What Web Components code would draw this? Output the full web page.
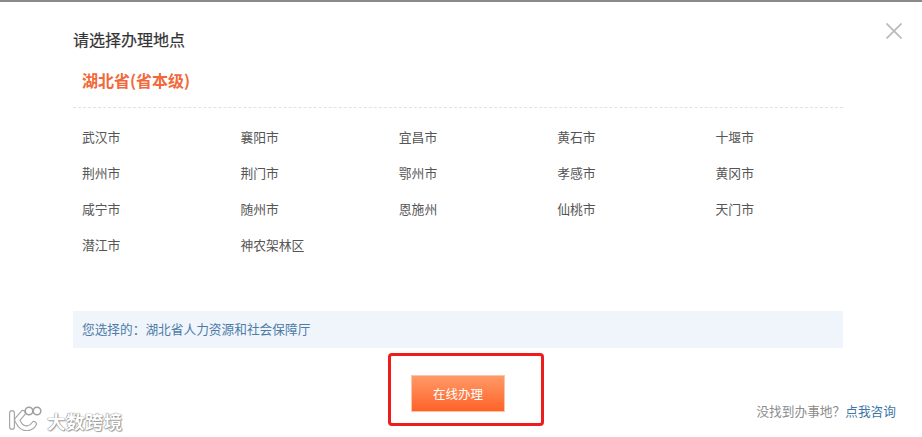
<!DOCTYPE html>
<html lang="zh">
<head>
<meta charset="utf-8">
<title>请选择办理地点</title>
<style>
  html, body { margin: 0; padding: 0; background: #fff; }
  body { font-family: "Noto Sans CJK SC", "Liberation Sans", sans-serif; overflow: hidden; }
</style>
</head>
<body>
<place-dialog>
  <span slot="title">请选择办理地点</span>
  <span slot="province">湖北省(省本级)</span>
  <city-list cities="武汉市,襄阳市,宜昌市,黄石市,十堰市,荆州市,荆门市,鄂州市,孝感市,黄冈市,咸宁市,随州市,恩施州,仙桃市,天门市,潜江市,神农架林区"></city-list>
  <picked-place slot="picked">您选择的&#xFF1A;湖北省人力资源和社会保障厅</picked-place>
  <go-button slot="action">在线办理</go-button>
  <help-link slot="help"></help-link>
  <brand-mark slot="mark"></brand-mark>
</place-dialog>

<script>
// Dialog shell: top rule, close cross, heading, province, list, picked line, footer.
class PlaceDialog extends HTMLElement {
  connectedCallback() {
    this.attachShadow({ mode: 'open' }).innerHTML = `
      <style>
        :host { display: flex; flex-direction: column; position: relative; width: 922px; height: 437px;
                box-sizing: border-box; border-top: 2px solid #8a8a8a; background: #fff; }
        .close { position: absolute; top: 21px; right: 20px; width: 16px; height: 16px; }
        .body { display: flex; flex-direction: column; margin: 0 79px 0 73px; }
        .title { height: 24px; line-height: 24px; margin-top: 25px; font-size: 16px; font-weight: 400;
                 color: #333; -webkit-text-stroke: 0.2px #333; }
        .province { height: 24px; line-height: 24px; margin-top: 17px; padding-left: 9px; font-size: 16px;
                    font-weight: 700; color: #f2683a; }
        .rule { margin-top: 15px; border-top: 1px dashed #e2e2e2; }
        .list { height: 203px; }
        .foot { display: flex; justify-content: center; padding-top: 27px; }
        /* red annotation box drawn over the screenshot, not centred on the button */
        .frame { position: absolute; left: 388px; top: 351px; box-sizing: border-box;
                 width: 156px; height: 73px; border: 3px solid #ee1c1c; border-radius: 4px; }
        .help { position: absolute; right: 26px; bottom: 17px; }
        .mark { position: absolute; left: 7px; bottom: 5px; }
      </style>
      <svg class="close" viewBox="0 0 16 16" fill="none" stroke="#bababa" stroke-width="1.7">
        <path d="M0.5 0.5L15.5 15.5M15.5 0.5L0.5 15.5"/>
      </svg>
      <div class="body">
        <div class="title"><slot name="title"></slot></div>
        <div class="province"><slot name="province"></slot></div>
        <div class="rule"></div>
        <div class="list"><slot></slot></div>
        <slot name="picked"></slot>
        <div class="foot"><slot name="action"></slot></div>
      </div>
      <div class="frame"></div>
      <div class="help"><slot name="help"></slot></div>
      <div class="mark"><slot name="mark"></slot></div>`;
  }
}

// Five-column grid of cities, from a comma list.
class CityList extends HTMLElement {
  connectedCallback() {
    const cities = (this.getAttribute('cities') || '').split(',');
    this.attachShadow({ mode: 'open' }).innerHTML = `
      <style>
        :host { display: block; }
        .grid { display: grid; grid-template-columns: repeat(5, 158.4px); grid-auto-rows: 36px;
                padding: 11px 0 0 9px; font-size: 12.8px; color: #555; }
        .grid span { line-height: 35px; white-space: nowrap; }
      </style>
      <div class="grid">${cities.map(c => `<span>${c}</span>`).join('')}</div>`;
  }
}

class PickedPlace extends HTMLElement {
  connectedCallback() {
    this.attachShadow({ mode: 'open' }).innerHTML = `
      <style>
        :host { display: block; height: 37px; line-height: 36px; padding-left: 9px; background: #f0f5fc;
                font-size: 12.7px; color: #4d7ba6; }
      </style>
      <slot></slot>`;
  }
}

class GoButton extends HTMLElement {
  connectedCallback() {
    this.attachShadow({ mode: 'open' }).innerHTML = `
      <style>
        :host { display: block; box-sizing: border-box; width: 94px; height: 37px; line-height: 35px;
                text-align: center; font-size: 12.5px; color: #fff; border: 1px solid #fbc5a8;
                background: linear-gradient(#ff9a68, #ff6228); }
      </style>
      <slot></slot>`;
  }
}

class HelpLink extends HTMLElement {
  connectedCallback() {
    this.attachShadow({ mode: 'open' }).innerHTML = `
      <style>
        :host { display: block; font-size: 12.7px; line-height: 18px; color: #8c8c8c; white-space: nowrap; }
        a { color: #3f77a8; text-decoration: none; }
      </style>
      没找到办事地&#xFF1F;<a href="#">点我咨询</a>`;
  }
}

// Faint watermark over the corner: outlined logo and brand name.
class BrandMark extends HTMLElement {
  connectedCallback() {
    this.attachShadow({ mode: 'open' }).innerHTML = `
      <style>
        :host { display: flex; align-items: center; gap: 4px; height: 28px; }
        span { font-size: 18.5px; line-height: 20px; letter-spacing: 0.4px; color: #fff; font-weight: 700; margin-top: 5px;
               text-shadow: 0 0 1px #777, 0 0 1px #777, 1px 1px 1px #aaa; }
      </style>
      <svg width="36" height="26" viewBox="0 0 36 26" fill="none">
        <g stroke="#a8a8a8" stroke-width="6" stroke-linecap="round" stroke-linejoin="round">
          <path d="M5 8V22M16 8L10 15L13 20C17 25 24 24 27 19"/>
        </g>
        <g stroke="#fff" stroke-width="3.6" stroke-linecap="round" stroke-linejoin="round">
          <path d="M5 8V22M16 8L10 15L13 20C17 25 24 24 27 19"/>
        </g>
        <g stroke="#a0a0a0" stroke-width="1.6" fill="#fff">
          <circle cx="22" cy="6" r="3.8"/>
          <circle cx="30" cy="6" r="3.8"/>
        </g>
      </svg>
      <span>大数跨境</span>`;
  }
}

customElements.define('place-dialog', PlaceDialog);
customElements.define('city-list', CityList);
customElements.define('picked-place', PickedPlace);
customElements.define('go-button', GoButton);
customElements.define('help-link', HelpLink);
customElements.define('brand-mark', BrandMark);
</script>
</body>
</html>
